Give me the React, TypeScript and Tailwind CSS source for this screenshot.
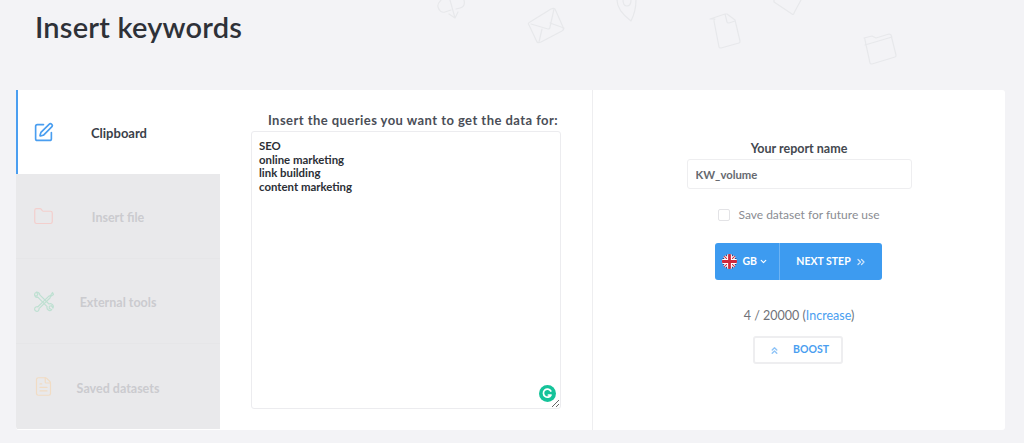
import { ChevronDown, ChevronsRight, ChevronsUp, FileText, Folder, SquarePen } from "lucide-react";

function Decor() {
  return (
    <svg className="absolute left-[420px] top-0 h-[90px] w-[604px]" viewBox="0 0 604 90" fill="none" stroke="#e7e8eb" strokeWidth="1.2" strokeLinejoin="round" strokeLinecap="round">
      {/* cloud download */}
      <path d="M21 0c-1 2-4 3-3 7 1 4 4 6 7 5l6-2M36 9l4-1c4-1 5-4 4-8M30 0l5 18M29 14l6 4 3-6" />
      {/* envelope */}
      <path d="M110 22l21-13c2-1 3-1 4 0l8 18c1 2 1 3-1 4l-21 11c-2 1-3 1-4 0l-8-17c-1-1-1-2 1-3z" />
      <path d="M111 24l17 5c1 0 2-1 2-2l4-18M130 23l14 5M122 29l-3 13" />
      {/* pin */}
      <path d="M197 0c0 8 6 15 14 21 3-6 5-13 5-21M203 0c0 3 1 6 4 6s4-3 4-6" />
      {/* file */}
      <path d="M290 19l15-5 2 0 8 6 5 21c0 1 0 2-1 2l-18 5c-1 0-2 0-2-1l-5-26c0-1 0-2 1-2zM305 14l2 8c0 1 1 1 2 1l6-2" />
      {/* corner of a rotated square */}
      <path d="M354 0v2l18 12c1 1 2 0 2-1l7-13" />
      {/* folder */}
      <path d="M444 38l8-2 4 2 13-4c1 0 2 0 2 1l5 20c0 1 0 2-1 2l-23 7c-1 0-2 0-2-1l-5-23c0-1 0-2-1-2zM445 45l27-8" />
    </svg>
  );
}

function ToolsIcon() {
  return (
    <svg width="21" height="21" viewBox="0 0 21 21" fill="none" stroke="#bfe0d2" strokeWidth="1.2" strokeLinejoin="round" strokeLinecap="round">
      {/* wrench */}
      <path d="M3 1.5c-1 .3-1.8 2-1.2 3.2.5 1.2 1.8 1.8 3 1.4l9.3 9.6c-.4 1.4.2 2.7 1.5 3.4 1.2.6 2.6.4 3.2-.4l-2.6-1.4.2-2 2-.6 1.6 2.4c.6-1.4.2-3-1-3.8-1-.7-2-.8-3-.3L6.8 3.8C6.6 2.4 5 .8 3.4 1l1.4 2.4-1 1.6-2-.4" />
      {/* screwdriver */}
      <path d="M19.5 1.5l-2 3-1.6.6-11 10.7c-1.4-.4-2.9.4-3.2 1.6-.4 1.4.6 2.8 2 2.9 1.4.1 2.6-1.2 2.3-2.7L17 7l.6-1.4 2.9-2.2z" />
    </svg>
  );
}

function GrammarlyBadge() {
  return (
    <div className="absolute bottom-[7px] right-[5px] flex h-[17px] w-[17px] items-center justify-center rounded-full bg-[#15c39a]">
      <svg width="11" height="11" viewBox="0 0 11 11" fill="none" stroke="#fff" strokeWidth="1.7" strokeLinecap="round" strokeLinejoin="round">
        <path d="M8.8 3A4 4 0 1 0 9 7H6.4" />
      </svg>
    </div>
  );
}

function Side({ icon, label, last }: { icon: React.ReactNode; label: string; last?: boolean }) {
  return (
    <div className={`relative flex h-[85px] items-center justify-center ${last ? "" : "border-b border-[#e6e6e8]"}`}>
      <span className="absolute left-[17px]">{icon}</span>
      <span className="pt-[5px] text-[12.5px] font-bold text-[#cbcbcf]">{label}</span>
    </div>
  );
}

function Flag() {
  return (
    <svg width="15" height="15" viewBox="0 0 14 14">
      <clipPath id="flag-clip"><circle cx="7" cy="7" r="7" /></clipPath>
      <g clipPath="url(#flag-clip)">
        <rect width="14" height="14" fill="#2b3f82" />
        <path d="M0 0l14 14M14 0L0 14" stroke="#fff" strokeWidth="3" />
        <path d="M0 0l14 14M14 0L0 14" stroke="#d0283c" strokeWidth="1" />
        <path d="M7 0v14M0 7h14" stroke="#fff" strokeWidth="4.5" />
        <path d="M7 0v14M0 7h14" stroke="#d0283c" strokeWidth="2.6" />
      </g>
    </svg>
  );
}

export default function App() {
  return (
    <div className="relative h-[443px] w-[1024px] overflow-hidden bg-[#f3f3f6] font-['Lato',sans-serif]">
      <Decor />
      <h1 className="h-[90px] pl-[35px] pt-[7px] text-[29px] font-semibold leading-[40px] tracking-[0.2px] text-[#2e3138]">Insert keywords</h1>

      <div className="relative ml-4 flex h-[340px] w-[989px] rounded-[3px] bg-white">
        {/* Sidebar */}
        <div className="w-[204px] shrink-0 overflow-hidden rounded-bl-[4px]">
          <div className="relative flex h-[84px] items-center justify-center border-l-2 border-[#4a9ef0] bg-white">
            <SquarePen className="absolute left-[15px] h-[21px] w-[21px] text-[#4a9ef0]" strokeWidth={1.9} />
            <span className="pt-[3px] text-[13px] font-bold text-[#3a3f4a]">Clipboard</span>
          </div>
          <div className="bg-[#e9e9eb]">
            <Side label="Insert file" icon={<Folder className="h-[21px] w-[21px] text-[#f3cfcd]" strokeWidth={1.4} />} />
            <Side label="External tools" icon={<ToolsIcon />} />
            <Side label="Saved datasets" last icon={<FileText className="h-[21px] w-[21px] text-[#f1dcc4]" strokeWidth={1.4} />} />
          </div>
        </div>

        {/* Textarea column */}
        <div className="flex w-[373px] shrink-0 flex-col border-r border-[#eeeef0] pl-[31px]">
          <p className="mt-[21px] h-[20px] w-[324px] text-center text-[13px] font-bold leading-[18px] tracking-[0.45px] text-[#4a4e57]">Insert the queries you want to get the data for:</p>
          <div className="relative h-[278px] w-[310px]">
            <textarea
              readOnly
              defaultValue={"SEO\nonline marketing\nlink building\ncontent marketing"}
              className="block h-full w-full resize rounded-[3px] border border-[#ececef] px-[7px] py-[7px] text-[11.4px] font-bold leading-[13.7px] text-[#2c2f36] outline-none"
            />
            <GrammarlyBadge />
          </div>
        </div>

        {/* Report column */}
        <div className="flex flex-1 flex-col items-center pt-[51px]">
          <label className="h-[18px] text-[12.5px] font-bold leading-[16px] text-[#44484f]">Your report name</label>
          <input
            readOnly
            defaultValue="KW_volume"
            className="h-[30px] w-[225px] rounded-[3px] border border-[#eeeef0] px-2 text-[11.3px] font-bold text-[#66696f] outline-none"
          />
          <div className="mt-[19px] flex items-center gap-[8px] text-[12px] leading-[14px] text-[#8a8c92]">
            <span className="h-3 w-3 rounded-[2px] border border-[#e3e3e6]" />
            Save dataset for future use
          </div>
          <div className="mr-[2px] mt-[21px] flex h-[37px] w-[167px] overflow-hidden rounded-[3px] bg-[#3d9bf0] text-white">
            <div className="flex w-[65px] items-center border-r border-[#6cb3f4] pl-[7px]">
              <Flag />
              <span className="ml-[6px] text-[10.5px] font-bold">GB</span>
              <ChevronDown className="ml-[2px] h-[9px] w-[9px]" strokeWidth={3} />
            </div>
            <div className="flex flex-1 items-center justify-center pl-[2px] text-[10.5px] font-bold">
              NEXT STEP
              <ChevronsRight className="ml-[4px] h-[12px] w-[12px] text-[#cfe5fb]" strokeWidth={2.5} />
            </div>
          </div>
          <p className="mt-[28px] h-[18px] text-[12.5px] leading-[16px] text-[#707278]">
            4 / 20000 (<span className="text-[#4a9ef0]">Increase</span>)
          </p>
          <button className="mr-[2px] mt-[10px] flex h-[28px] w-[90px] items-center rounded-[3px] border-2 border-[#eeeef0] bg-white pl-[14px] text-[#4a9ef0]">
            <ChevronsUp className="h-[11px] w-[11px] text-[#8fc4f7]" strokeWidth={3} />
            <span className="ml-[13px] text-[10.5px] font-bold">BOOST</span>
          </button>
        </div>
      </div>
    </div>
  );
}
